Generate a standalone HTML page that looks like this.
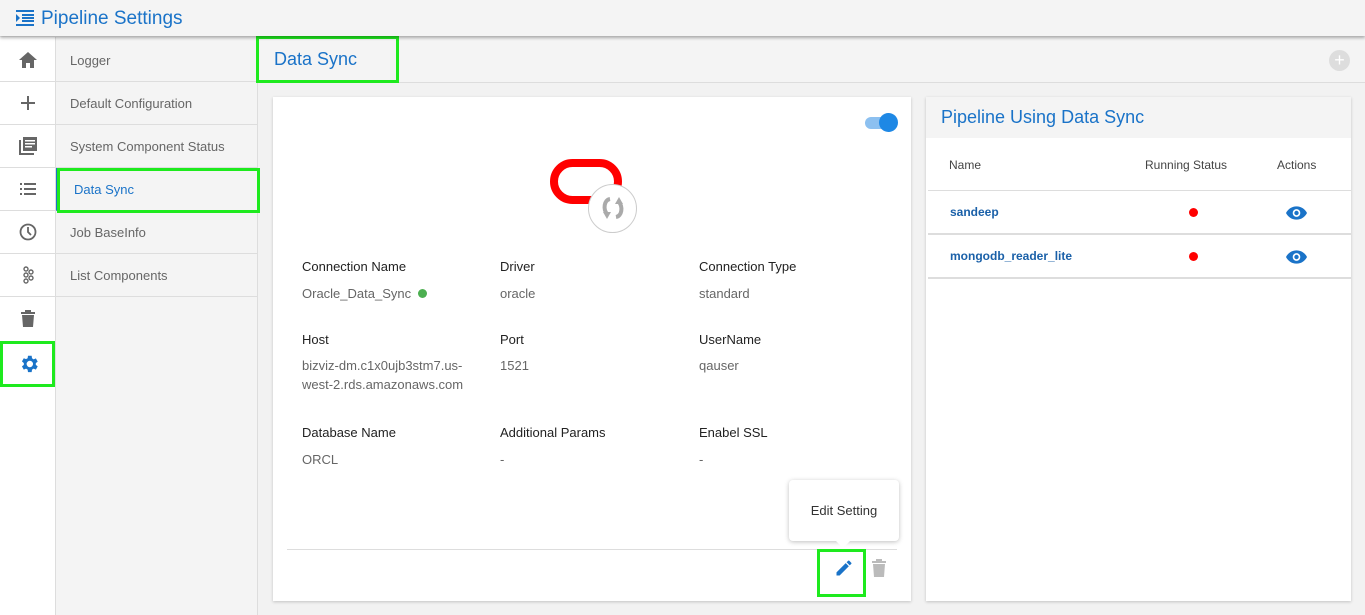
<!DOCTYPE html>
<html><head><style>
*{box-sizing:border-box;margin:0;padding:0}
body{width:1365px;height:615px;overflow:hidden;background:#f2f2f2;font-family:"Liberation Sans",sans-serif;position:relative}
.abs{position:absolute}
.hdr{left:0;top:0;width:1365px;height:36px;background:#f4f4f4;box-shadow:0 2px 3px rgba(0,0,0,.3);z-index:2}
.rail{left:0;top:37px;width:56px;height:578px;background:#fff;border-right:1px solid #ddd;padding-top:2px}
.rail div{height:43px;border-bottom:1px solid #ddd;display:flex;align-items:center;justify-content:center}
.menu{left:56px;top:37px;width:202px;height:578px;background:#f4f4f4;border-right:1px solid #ddd;padding-top:2px}
.menu div{height:43px;border-bottom:1px solid #ddd;font-size:13px;color:#666;padding-left:14px;line-height:43px}
.g{border:3px solid #1eea1e;position:absolute}
.lbl{font-size:13px;color:#222;position:absolute}
.val{font-size:13px;color:#666;position:absolute;line-height:19px}
</style></head><body>
<div class="abs hdr">
<svg class="abs" style="left:16px;top:10px" width="18" height="16" viewBox="0 0 18 16"><path d="M0 0h18v2H0zM6 4h12v2H6zM6 7h12v2H6zM6 10h12v2H6zM0 14h18v2H0zM0 4l4 4-4 4z" fill="#1a73c8"/></svg>
<div class="abs" style="left:41px;top:8px;font-size:19px;color:#1a73c8">Pipeline Settings</div>
</div>
<div class="abs rail">
<div><svg width="18" height="16" viewBox="0 0 18 16"><path d="M9 0L0 8h3v8h4v-5h4v5h4V8h3z" fill="#666"/></svg></div>
<div><svg width="14" height="14"><path d="M6 0h2v6h6v2H8v6H6V8H0V6h6z" fill="#666"/></svg></div>
<div><svg width="18" height="18" viewBox="0 0 18 18"><path d="M0 3h2v13h13v2H0z M4 0h14v14H4z" fill="#666"/><path d="M6 3h10v1.5H6zM6 6h10v1.5H6zM6 9h7v1.5H6z" fill="#fff"/></svg></div>
<div><svg width="16" height="12"><path d="M0 0h2v2H0zM4 0h12v2H4zM0 5h2v2H0zM4 5h12v2H4zM0 10h2v2H0zM4 10h12v2H4z" fill="#666"/></svg></div>
<div><svg width="18" height="18"><circle cx="9" cy="9" r="7.5" fill="none" stroke="#666" stroke-width="1.8"/><path d="M9 4v5l3 3" fill="none" stroke="#666" stroke-width="1.8"/></svg></div>
<div><svg width="12" height="18"><g fill="none" stroke="#666" stroke-width="1.4"><circle cx="4" cy="3" r="2"/><circle cx="4" cy="9" r="2"/><circle cx="4" cy="15" r="2"/><circle cx="9" cy="6" r="2"/><circle cx="9" cy="12" r="2"/></g></svg></div>
<div style="border:none"><svg width="14" height="17"><path d="M0 2h14v2H0zM4 0h6v2H4zM1 5h12l-1 12H2z" fill="#666"/></svg></div>
<div style="border:none;border-left:3px solid #1a73c8;margin-top:2px"><svg width="22" height="22" viewBox="0 0 24 24"><path fill="#1a73c8" d="M19.4 13a7.5 7.5 0 000-2l2.1-1.6-2-3.5-2.5 1a7 7 0 00-1.7-1L14.9 3h-4l-.4 2.7a7 7 0 00-1.7 1l-2.5-1-2 3.5L6.4 11a7.5 7.5 0 000 2l-2.1 1.6 2 3.5 2.5-1a7 7 0 001.7 1l.4 2.7h4l.4-2.7a7 7 0 001.7-1l2.5 1 2-3.5zM12.9 15.5a3.5 3.5 0 110-7 3.5 3.5 0 010 7z"/></svg></div>
</div>
<div class="g" style="left:0;top:341px;width:55px;height:46px"></div>
<div class="abs menu">
<div>Logger</div><div>Default Configuration</div><div>System Component Status</div>
<div style="color:#1a73c8;border-left:2px solid #1a73c8;padding-left:16px">Data Sync</div>
<div>Job BaseInfo</div><div>List Components</div>
</div>
<div class="g" style="left:57px;top:168px;width:203px;height:45px"></div>
<div class="abs" style="left:258px;top:37px;width:1107px;height:46px;background:#f4f4f4;border-bottom:1px solid #ddd"></div>
<div class="abs" style="left:274px;top:49px;font-size:18px;color:#1a73c8">Data Sync</div>
<div class="g" style="left:256px;top:36px;width:143px;height:47px"></div>
<div class="abs" style="left:1329px;top:50px;width:21px;height:21px;border-radius:50%;background:#ddd;color:#fff;font-size:18px;line-height:20px;text-align:center">+</div>

<div class="abs" style="left:273px;top:97px;width:638px;height:504px;background:#fff;box-shadow:0 1px 3px rgba(0,0,0,.2)"></div>
<div class="abs" style="left:865px;top:117px;width:30px;height:12px;border-radius:6px;background:#8cc0f0"></div>
<div class="abs" style="left:879px;top:113px;width:19px;height:19px;border-radius:50%;background:#1e88e5"></div>
<div class="abs" style="left:550px;top:159px;width:72px;height:45px;border:8px solid #f00;border-radius:23px"></div>
<div class="abs" style="left:588px;top:184px;width:49px;height:49px;border-radius:50%;background:#fff;border:1px solid #ccc"></div>
<svg class="abs" style="left:598px;top:193px" width="30" height="30" viewBox="0 0 30 30"><g fill="none" stroke="#aaa" stroke-width="4"><path d="M12 6C6 7 5 16 9 21"/><path d="M18 24c6-1 7-10 3-15"/></g><path d="M5 19l8 0-4 7z" fill="#aaa"/><path d="M25 11l-8 0 4-7z" fill="#aaa"/></svg>
<div class="lbl" style="left:302px;top:259px">Connection Name</div>
<div class="lbl" style="left:500px;top:259px">Driver</div>
<div class="lbl" style="left:699px;top:259px">Connection Type</div>
<div class="val" style="left:302px;top:284px">Oracle_Data_Sync <span style="display:inline-block;width:9px;height:9px;border-radius:50%;background:#4caf50;margin-left:3px"></span></div>
<div class="val" style="left:500px;top:284px">oracle</div>
<div class="val" style="left:699px;top:284px">standard</div>
<div class="lbl" style="left:302px;top:332px">Host</div>
<div class="lbl" style="left:500px;top:332px">Port</div>
<div class="lbl" style="left:699px;top:332px">UserName</div>
<div class="val" style="left:302px;top:356px;width:170px">bizviz-dm.c1x0ujb3stm7.us-west-2.rds.amazonaws.com</div>
<div class="val" style="left:500px;top:356px">1521</div>
<div class="val" style="left:699px;top:356px">qauser</div>
<div class="lbl" style="left:302px;top:425px">Database Name</div>
<div class="lbl" style="left:500px;top:425px">Additional Params</div>
<div class="lbl" style="left:699px;top:425px">Enabel SSL</div>
<div class="val" style="left:302px;top:450px">ORCL</div>
<div class="val" style="left:500px;top:450px">-</div>
<div class="val" style="left:699px;top:450px">-</div>
<div class="abs" style="left:287px;top:549px;width:610px;height:1px;background:#ddd"></div>
<div class="abs" style="left:789px;top:480px;width:110px;height:61px;background:#fff;border-radius:4px;box-shadow:0 1px 5px rgba(0,0,0,.25);font-size:13px;color:#333;text-align:center;line-height:61px">Edit Setting</div>
<div class="abs" style="left:836px;top:541px;width:0;height:0;border-left:7px solid transparent;border-right:7px solid transparent;border-top:7px solid #fff"></div>
<svg class="abs" style="left:834px;top:558px" width="20" height="20" viewBox="0 0 24 24"><path fill="#1a73c8" d="M3 17.25V21h3.75L17.8 9.94l-3.75-3.75zM20.7 7.04a1 1 0 000-1.41l-2.34-2.34a1 1 0 00-1.41 0l-1.83 1.83 3.75 3.75z"/></svg>
<svg class="abs" style="left:872px;top:559px" width="14" height="18"><path d="M0 2h14v2H0zM4 0h6v2H4zM1 5h12l-1 13H2z" fill="#bbb"/></svg>
<div class="g" style="left:817px;top:549px;width:49px;height:48px"></div>

<div class="abs" style="left:926px;top:97px;width:425px;height:504px;background:#fff;box-shadow:0 1px 3px rgba(0,0,0,.2)"></div>
<div class="abs" style="left:926px;top:97px;width:425px;height:41px;background:#f4f4f4"></div>
<div class="abs" style="left:941px;top:107px;font-size:18px;color:#1a73c8">Pipeline Using Data Sync</div>
<div class="abs" style="left:949px;top:158px;font-size:12px;color:#444">Name</div>
<div class="abs" style="left:1145px;top:158px;font-size:12px;color:#444">Running Status</div>
<div class="abs" style="left:1277px;top:158px;font-size:12px;color:#444">Actions</div>
<div class="abs" style="left:928px;top:190px;width:423px;height:1px;background:#ddd"></div>
<div class="abs" style="left:928px;top:233px;width:423px;height:2px;background:#ddd"></div>
<div class="abs" style="left:928px;top:277px;width:423px;height:2px;background:#ddd"></div>
<div class="abs" style="left:950px;top:205px;font-size:12px;color:#1a60a8;font-weight:bold">sandeep</div>
<div class="abs" style="left:950px;top:249px;font-size:12px;color:#1a60a8;font-weight:bold">mongodb_reader_lite</div>
<div class="abs" style="left:1189px;top:208px;width:9px;height:9px;border-radius:50%;background:#f00"></div>
<div class="abs" style="left:1189px;top:252px;width:9px;height:9px;border-radius:50%;background:#f00"></div>
<svg class="abs" style="left:1286px;top:206px" width="21" height="14" viewBox="0 0 22 14"><path d="M11 0C6 0 2 3 0 7c2 4 6 7 11 7s9-3 11-7c-2-4-6-7-11-7z" fill="#1a73c8"/><circle cx="11" cy="7" r="4" fill="#fff"/><circle cx="11" cy="7" r="2.3" fill="#1a73c8"/></svg>
<svg class="abs" style="left:1286px;top:250px" width="21" height="14" viewBox="0 0 22 14"><path d="M11 0C6 0 2 3 0 7c2 4 6 7 11 7s9-3 11-7c-2-4-6-7-11-7z" fill="#1a73c8"/><circle cx="11" cy="7" r="4" fill="#fff"/><circle cx="11" cy="7" r="2.3" fill="#1a73c8"/></svg>
</body></html>
